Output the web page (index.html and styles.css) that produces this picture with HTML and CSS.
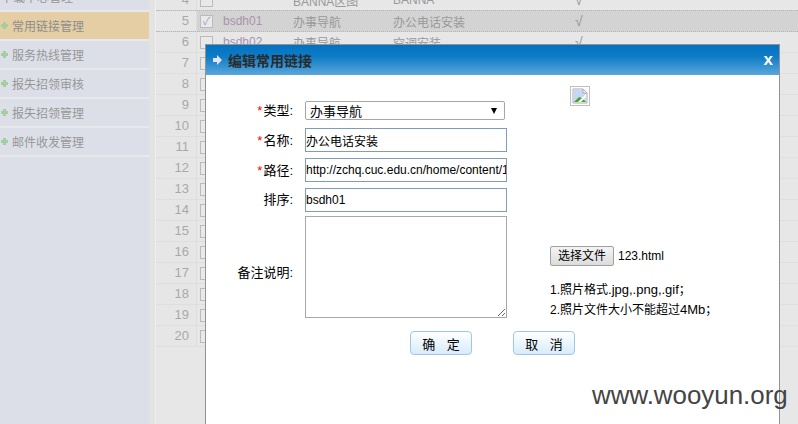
FILE: index.html
```html
<!DOCTYPE html>
<html lang="en">
<head>
    <meta charset="UTF-8">
    <meta name="viewport" content="width=device-width, initial-scale=1.0">
    <link rel="stylesheet" href="styles.css">
    <title>编辑常用链接</title>
</head>
<body>
    <div class="page">
        <nav class="sidebar">
            <div class="nav-item">下载中心管理</div>
            <div class="nav-item active"><span class="plus"></span>常用链接管理</div>
            <div class="nav-item"><span class="plus"></span>服务热线管理</div>
            <div class="nav-item"><span class="plus"></span>报失招领审核</div>
            <div class="nav-item"><span class="plus"></span>报失招领管理</div>
            <div class="nav-item"><span class="plus"></span>邮件收发管理</div>
        </nav>
        <div class="gutter"></div>
        <main class="grid">
            <div class="row"><span class="num">4</span><span class="chk"><i class="box"></i></span><span class="code"></span><span class="type">BANNA区图</span><span class="name">BANNA</span><span class="ok">√</span></div>
            <div class="row selected"><span class="num">5</span><span class="chk"><i class="box checked">✓</i></span><span class="code">bsdh01</span><span class="type">办事导航</span><span class="name">办公电话安装</span><span class="ok">√</span></div>
            <div class="row"><span class="num">6</span><span class="chk"><i class="box"></i></span><span class="code">bsdh02</span><span class="type">办事导航</span><span class="name">空调安装</span><span class="ok">√</span></div>
            <div class="row"><span class="num">7</span><span class="chk"><i class="box"></i></span></div>
            <div class="row"><span class="num">8</span><span class="chk"><i class="box"></i></span></div>
            <div class="row"><span class="num">9</span><span class="chk"><i class="box"></i></span></div>
            <div class="row"><span class="num">10</span><span class="chk"><i class="box"></i></span></div>
            <div class="row"><span class="num">11</span><span class="chk"><i class="box"></i></span></div>
            <div class="row"><span class="num">12</span><span class="chk"><i class="box"></i></span></div>
            <div class="row"><span class="num">13</span><span class="chk"><i class="box"></i></span></div>
            <div class="row"><span class="num">14</span><span class="chk"><i class="box"></i></span></div>
            <div class="row"><span class="num">15</span><span class="chk"><i class="box"></i></span></div>
            <div class="row"><span class="num">16</span><span class="chk"><i class="box"></i></span></div>
            <div class="row"><span class="num">17</span><span class="chk"><i class="box"></i></span></div>
            <div class="row"><span class="num">18</span><span class="chk"><i class="box"></i></span></div>
            <div class="row"><span class="num">19</span><span class="chk"><i class="box"></i></span></div>
            <div class="row"><span class="num">20</span><span class="chk"><i class="box"></i></span></div>
        </main>
    </div>

    <!-- Edit dialog -->
    <section class="dialog">
        <header class="dialog-head">
            <svg class="head-arrow" width="9" height="10" viewBox="0 0 9 10"><path d="M0 3h4V0l5 5-5 5V7H0z" fill="#e4e4fb"/></svg>
            <h2>编辑常用链接</h2>
            <span class="close">x</span>
        </header>
        <div class="dialog-body">
            <div class="fields">
                <form class="form">
                    <label class="req">类型:</label>
                    <div class="fake-select"><span>办事导航</span><i class="caret"></i></div>
                    <label class="req">名称:</label>
                    <input class="text" type="text" value="办公电话安装">
                    <label class="req">路径:</label>
                    <input class="text" type="text" value="http://zchq.cuc.edu.cn/home/content/1">
                    <label>排序:</label>
                    <input class="text" type="text" value="bsdh01">
                    <label class="memo-label">备注说明:</label>
                    <textarea class="memo"></textarea>
                </form>
                <div class="upload">
                    <div class="broken">
                        <svg width="16" height="16" viewBox="0 0 16 16">
                            <path d="M1 1h10l4 4v10H1z" fill="#fff" stroke="#a9a9a9"/>
                            <path d="M2 2h9v3h3v9H2z" fill="#c5d7f6"/>
                            <path d="M2 14l5-5 3 1 4 4z" fill="#4ca32c"/>
                            <path d="M6 14l8-8v3l-5 5z" fill="#fff"/>
                            <path d="M11 1v4h4" fill="none" stroke="#a9a9a9"/>
                        </svg>
                    </div>
                    <div class="file-row"><span class="file-btn">选择文件</span><span>123.html</span></div>
                    <p class="note">1.照片格式<span class="latin">.jpg,.png,.gif</span>；</p>
                    <p class="note">2.照片文件大小不能超过<span class="latin">4Mb</span>；</p>
                </div>
            </div>
            <div class="actions">
                <button type="button">确 定</button>
                <button type="button">取 消</button>
            </div>
        </div>
    </section>

    <div class="watermark">www.wooyun.org</div>
</body>
</html>
```
FILE: styles.css
```css
html, body {
    margin: 0;
    padding: 0;
    height: 424px;
    overflow: hidden;
}

body {
    font-family: 'Liberation Sans', 'Noto Sans CJK SC', sans-serif;
    font-size: 12px;
    color: #000;
    background-color: #e7e7e7;
}

.page {
    display: flex;
    height: 424px;
}

/* left menu */
.sidebar {
    width: 149px;
    flex: none;
    margin-top: -17px;
    background-color: #dcdfe8;
}

.nav-item {
    display: flex;
    align-items: center;
    height: 27px;
    border-bottom: 2px solid #e7e8ec;
    padding-left: 1px;
    font-size: 12px;
    color: #979797;
}

.nav-item.active {
    background-color: #e5cda4;
    color: #8d8d8d;
}

.plus {
    width: 7px;
    height: 7px;
    margin-right: 4px;
    background:
        linear-gradient(#a3cfa0, #a3cfa0) center / 3px 7px no-repeat,
        linear-gradient(#a3cfa0, #a3cfa0) center / 7px 3px no-repeat;
}

.gutter {
    width: 6px;
    flex: none;
    background-color: #e3e3e3;
    border-right: 1px solid #efefef;
}

/* table behind the dialog */
.grid {
    flex: 1;
    margin-top: -10px;
}

.row {
    display: flex;
    align-items: center;
    height: 20px;
    border-bottom: 1px solid #dedede;
    color: #999;
}

.row.selected {
    background-color: #d3d3d3;
    border-top: 1px dotted #b5b5b5;
    border-bottom: 1px dotted #b5b5b5;
    margin-top: -1px;
}

.num {
    width: 33px;
    padding-right: 7px;
    text-align: right;
    font-size: 13px;
    line-height: 20px;
    color: #a9a9a9;
    background-color: #e6e6e6;
    border-right: 1px solid #dddddd;
    flex: none;
}

.chk {
    width: 26px;
    flex: none;
    display: flex;
    padding-left: 3px;
    box-sizing: border-box;
}

.box {
    display: block;
    width: 11px;
    height: 11px;
    border: 1px solid #bbb;
    background-color: #e9e9e9;
    font-style: normal;
    font-size: 11px;
    line-height: 11px;
    text-align: center;
    color: #9aa6c4;
}

.code {
    width: 70px;
    flex: none;
    font-size: 12px;
    color: #a992ab;
}

.type {
    width: 100px;
    flex: none;
}

.name {
    width: 182px;
    flex: none;
}

.ok {
    font-size: 14px;
    color: #8f959b;
}

/* dialog */
.dialog {
    position: absolute;
    left: 205px;
    top: 44px;
    width: 575px;
    height: 380px;
    box-sizing: border-box;
    background-color: #fff;
    border: 1px solid #8f939b;
    border-bottom: none;
}

.dialog-head {
    display: flex;
    align-items: center;
    height: 30px;
    padding: 0 6px 0 7px;
    background: linear-gradient(#0272c1, #0f7cc6 40%, #5aa7db);
}

.head-arrow {
    flex: none;
}

.dialog-head h2 {
    flex: 1;
    margin: 0 0 0 6px;
    font-size: 14px;
    font-weight: bold;
    color: #2b2b2b;
}

.close {
    color: #fff;
    font-size: 17px;
    font-weight: bold;
    line-height: 20px;
}

.fields {
    display: flex;
}

.form {
    display: grid;
    grid-template-columns: 87px 202px;
    column-gap: 12px;
    align-items: center;
    align-content: start;
    padding-top: 26px;
    width: 301px;
    flex: none;
}

.form label {
    text-align: right;
    font-size: 13px;
    line-height: 16px;
    margin-bottom: 4px;
}

.form label:first-child {
    margin-bottom: 8px;
}

.form .memo-label {
    margin: 12px 0 0;
}

.req::before {
    content: "*";
    color: #f00;
    margin-right: 1px;
}

.fake-select {
    display: flex;
    align-items: center;
    justify-content: space-between;
    box-sizing: border-box;
    width: 200px;
    height: 19px;
    padding: 0 7px 0 4px;
    margin-bottom: 8px;
    border: 1px solid #a6a6a6;
    border-radius: 2px;
    font-size: 13px;
}

.caret {
    width: 0;
    height: 0;
    border-left: 3px solid transparent;
    border-right: 3px solid transparent;
    border-top: 6px solid #000;
}

.text {
    box-sizing: border-box;
    width: 202px;
    height: 24px;
    padding: 0;
    margin: 0 0 6px;
    border: 1px solid #7f9db9;
    font-family: 'Liberation Sans', 'Noto Sans CJK SC', sans-serif;
    font-size: 12px;
    color: #000;
    outline: none;
}

.text:nth-of-type(3) {
    margin-bottom: 4px;
}

.memo {
    box-sizing: border-box;
    display: block;
    width: 202px;
    height: 102px;
    margin: 0;
    border: 1px solid #a9a9a9;
}

.upload {
    margin-left: 43px;
}

.broken {
    box-sizing: border-box;
    width: 20px;
    height: 20px;
    margin: 11px 0 0 20px;
    padding: 1px;
    border: 1px solid #c0c0c0;
}

.broken svg {
    display: block;
}

.file-row {
    display: flex;
    align-items: center;
    margin-top: 140px;
    margin-bottom: 14px;
}

.file-btn {
    box-sizing: border-box;
    width: 64px;
    height: 20px;
    margin-right: 4px;
    line-height: 18px;
    text-align: center;
    border: 1px solid #a0a0a0;
    border-radius: 2px;
    background: linear-gradient(#f4f4f4, #dcdcdc);
}

.note {
    margin: 0;
    line-height: 20px;
    white-space: nowrap;
}

.latin {
    font-size: 13px;
}

.actions {
    display: flex;
    gap: 41px;
    padding: 11px 0 0 204px;
}

.actions button {
    width: 62px;
    height: 24px;
    padding: 0;
    border: 1px solid #9fc7e6;
    border-radius: 4px;
    background: linear-gradient(#fff, #d8ebfa);
    font-family: 'Liberation Sans', 'Noto Sans CJK SC', sans-serif;
    font-size: 13px;
    word-spacing: 8px;
    color: #000;
}

.watermark {
    position: absolute;
    left: 592px;
    top: 378px;
    font-size: 25.9px;
    line-height: 34px;
    color: #444;
    white-space: nowrap;
}
```
